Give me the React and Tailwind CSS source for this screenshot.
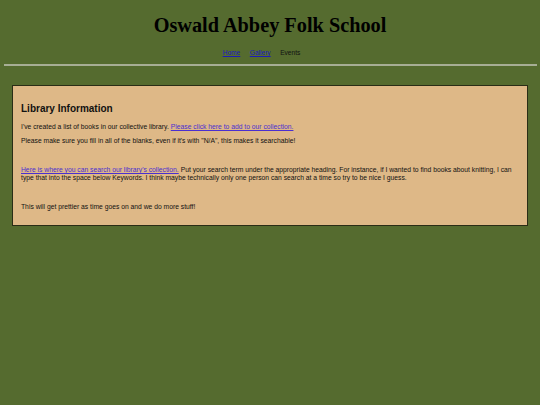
export default function App() {
  return (
    <div className="min-h-[405px] bg-[#556b2f] pt-[13.5px] pb-[20px] font-['Liberation_Sans',Arial,sans-serif] text-[#111]">
      <h1 className="text-center text-[20.3px] leading-[23px] font-bold font-['Liberation_Serif','Times_New_Roman',serif] text-black">
        Oswald Abbey Folk School
      </h1>
      <nav className="mt-[12.75px] flex justify-center gap-[9.5px] pl-[0px] pr-[17px] text-[6.6px] leading-[7.5px]">
        <a href="#" className="text-[#1c1cb8] underline">Home</a>
        <a href="#" className="text-[#1c1cb8] underline">Gallery</a>
        <span className="text-[#111]">Events</span>
      </nav>
      <div className="mt-[7.25px] mx-[3.5px] h-[1.5px] bg-[#a7ae95]" />
      <div className="mt-[19.5px] mx-[12px] border-[1.5px] border-[#2a2d16] bg-[#deb887] px-[8px] pt-[8px] pb-[8px]">
        <h2 className="mt-[8.5px] text-[10px] leading-[11.5px] font-bold text-[#111]">Library Information</h2>
        <p className="mt-[8.5px] text-[6.75px] leading-[7.75px]">
          I've created a list of books in our collective library.{" "}
          <a href="#" className="text-[#4a2fd0] underline">Please click here to add to our collection.</a>
        </p>
        <p className="mt-[6.75px] text-[6.75px] leading-[7.75px]">
          Please make sure you fill in all of the blanks, even if it's with "N/A", this makes it searchable!
        </p>
        <p className="mt-[6.75px] text-[6.75px] leading-[7.75px]">&nbsp;</p>
        <p className="mt-[6.75px] text-[6.75px] leading-[7.75px]">
          <a href="#" className="text-[#4a2fd0] underline">Here is where you can search our library's collection.</a>{" "}
          Put your search term under the appropriate heading. For instance, if I wanted to find books about knitting, I can type that into the space below Keywords. I think maybe technically only one person can search at a time so try to be nice I guess.
        </p>
        <p className="mt-[6.75px] text-[6.75px] leading-[7.75px]">&nbsp;</p>
        <p className="mt-[6.75px] mb-[6.75px] text-[6.75px] leading-[7.75px]">
          This will get prettier as time goes on and we do more stuff!
        </p>
      </div>
    </div>
  );
}
